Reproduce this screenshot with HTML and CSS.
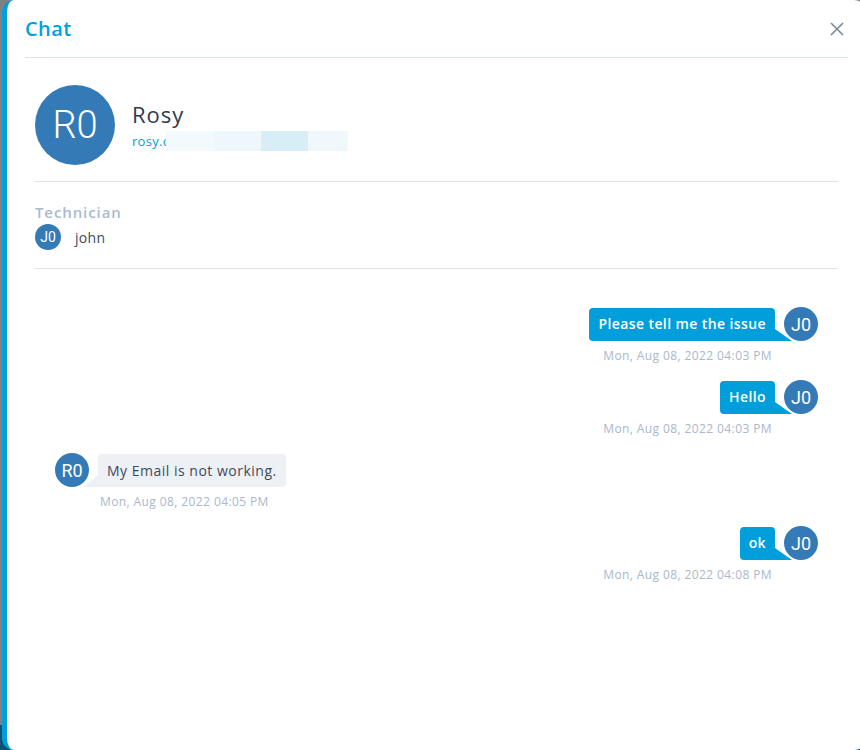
FILE: index.html
```html
<!DOCTYPE html>
<html lang="en">
<head>
    <meta charset="UTF-8">
    <meta name="viewport" content="width=device-width, initial-scale=1.0">
    <title>Chat</title>
    <link rel="stylesheet" href="styles.css">
</head>
<body>
    <div class="modal">
        <div class="modal-header">
            <h2 class="modal-title">Chat</h2>
            <span class="close">
                <svg width="16" height="16" viewBox="0 0 16 16"><path d="M2 2 L14 14 M14 2 L2 14" stroke="#7b8898" stroke-width="1.6" fill="none"/></svg>
            </span>
        </div>

        <div class="modal-body">
            <div class="profile">
                <div class="avatar avatar-lg">R0</div>
                <div class="profile-info">
                    <div class="profile-name">Rosy</div>
                    <div class="profile-email">rosy.c<span class="blur"></span></div>
                </div>
            </div>

            <div class="tech">
                <div class="tech-label">Technician</div>
                <div class="tech-row">
                    <div class="avatar avatar-sm">J0</div>
                    <span class="tech-name">john</span>
                </div>
            </div>

            <div class="messages">
                <div class="msg msg-out">
                    <div class="msg-col">
                        <div class="bubble">Please tell me the issue</div>
                        <div class="time">Mon, Aug 08, 2022 04:03 PM</div>
                    </div>
                    <div class="avatar avatar-md">J0</div>
                </div>
                <div class="msg msg-out">
                    <div class="msg-col">
                        <div class="bubble">Hello</div>
                        <div class="time">Mon, Aug 08, 2022 04:03 PM</div>
                    </div>
                    <div class="avatar avatar-md">J0</div>
                </div>
                <div class="msg msg-in">
                    <div class="avatar avatar-md">R0</div>
                    <div class="msg-col">
                        <div class="bubble">My Email is not working.</div>
                        <div class="time">Mon, Aug 08, 2022 04:05 PM</div>
                    </div>
                </div>
                <div class="msg msg-out">
                    <div class="msg-col">
                        <div class="bubble">ok</div>
                        <div class="time">Mon, Aug 08, 2022 04:08 PM</div>
                    </div>
                    <div class="avatar avatar-md">J0</div>
                </div>
            </div>
        </div>
    </div>
</body>
</html>
```

FILE: styles.css
```css
html, body {
    overflow: hidden;
}
body {
    margin: 0;
    width: 860px;
    height: 750px;
    font-family: "Open Sans", "Noto Sans", sans-serif;
    background: linear-gradient(to bottom, #7f8183 0, #7f8183 725px, #0d5474 725px);
}
.modal {
    margin-left: 2px;
    width: 864px;
    height: 750px;
    background: #fff;
    border-left: 5px solid #009fdb;
    border-radius: 12px;
    box-sizing: border-box;
}
.modal-header {
    height: 58px;
    margin: 0 18px;
    display: flex;
    align-items: center;
    justify-content: space-between;
    border-bottom: 1px solid #dde3ed;
    box-sizing: border-box;
}
.modal-title {
    margin: 0;
    font-size: 20px;
    font-weight: 600;
    letter-spacing: 0.4px;
    color: #009fdb;
}
.close {
    display: flex;
    margin-right: 3px;
}
.modal-body {
    padding: 0 28px;
}
.avatar {
    background: #337ab7;
    color: #fff;
    border-radius: 50%;
    display: flex;
    align-items: center;
    justify-content: center;
    font-family: Roboto, "Liberation Sans", sans-serif;
    flex-shrink: 0;
}
.avatar-lg {
    width: 80px;
    height: 80px;
    font-size: 38px;
    font-weight: 300;
}
.avatar-md {
    width: 34px;
    height: 34px;
    font-size: 18px;
}
.avatar-sm {
    width: 26px;
    height: 26px;
    font-size: 14px;
}
.profile {
    display: flex;
    align-items: center;
    padding: 27px 0 16px;
    border-bottom: 1px solid #dde3ed;
}
.profile-info {
    margin-left: 17px;
}
.profile-name {
    font-size: 22px;
    line-height: 30px;
    letter-spacing: 1px;
    color: #2f3b4d;
}
.profile-email {
    font-size: 13px;
    line-height: 20px;
    letter-spacing: 0.3px;
    color: #0a9cd8;
    display: flex;
    margin-top: 2px;
}
.blur {
    display: inline-block;
    width: 182px;
    height: 20px;
    margin-left: -3px;
    background: linear-gradient(to right, #f3fafd 0, #f3fafd 48px, #eef7fb 48px, #eef7fb 95px, #d8eef7 95px, #d8eef7 142px, #f0f8fc 142px);
}
.tech {
    padding: 20px 0 18px;
    border-bottom: 1px solid #dde3ed;
}
.tech-label {
    font-size: 15px;
    font-weight: 600;
    line-height: 20px;
    letter-spacing: 0.9px;
    color: #a9bbd1;
    margin-bottom: 2px;
}
.tech-row {
    display: flex;
    align-items: center;
}
.tech-name {
    margin-left: 14px;
    font-size: 14px;
    letter-spacing: 0.3px;
    color: #3d4a5c;
}
.messages {
    padding: 38px 20px 0;
}
.msg {
    display: flex;
    align-items: flex-start;
    gap: 9px;
    margin-bottom: 12px;
}
.msg-out {
    justify-content: flex-end;
}
.msg-col {
    display: flex;
    flex-direction: column;
    padding-top: 1px;
}
.msg-out .msg-col {
    align-items: flex-end;
}
.bubble {
    position: relative;
    height: 33px;
    box-sizing: border-box;
    padding: 0 9px;
    line-height: 33px;
    font-size: 14px;
    letter-spacing: 0.45px;
    border-radius: 4px;
}
.msg-out .bubble {
    background: #009fdb;
    color: #fff;
    font-weight: 600;
    letter-spacing: 0.4px;
    line-height: 31px;
    border-bottom-right-radius: 0;
}
.msg-out .bubble::after {
    content: "";
    position: absolute;
    right: -17px;
    bottom: 0;
    border-bottom: 12px solid #009fdb;
    border-right: 17px solid transparent;
}
.msg-in .bubble {
    background: #edf0f5;
    color: #3d4a5c;
    letter-spacing: 0.5px;
    border-bottom-left-radius: 0;
}
.msg-in .bubble::before {
    content: "";
    position: absolute;
    left: -15px;
    bottom: 0;
    border-bottom: 12px solid #edf0f5;
    border-left: 15px solid transparent;
}
.time {
    margin-top: 3px;
    font-size: 12px;
    line-height: 24px;
    letter-spacing: 0.4px;
    color: #a9b8cc;
    padding: 0 3px;
}
.msg-in .time {
    padding: 0 2px;
}
```
